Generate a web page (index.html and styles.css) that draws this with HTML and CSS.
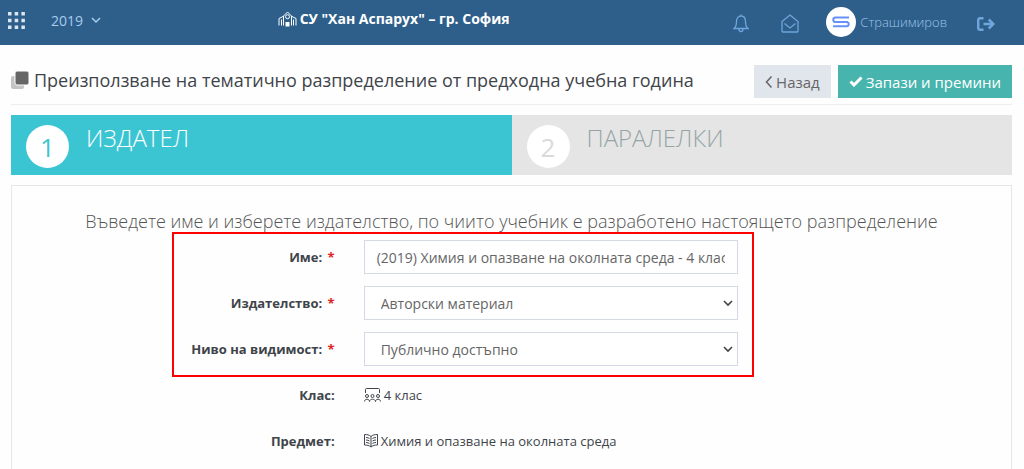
FILE: index.html
```html
<!DOCTYPE html>
<html lang="bg">
<head>
    <meta charset="UTF-8">
    <meta name="viewport" content="width=device-width, initial-scale=1.0">
    <title>Преизползване на тематично разпределение</title>
    <link rel="stylesheet" href="styles.css">
</head>
<body>
    <header class="topbar">
        <div class="topbar-left">
            <button type="button" class="icon-button" aria-label="Меню">
                <svg class="icon-apps" width="17" height="17" viewBox="0 0 17 17">
                    <path d="M0 0h3.500v3.500H0zM6.700 0h3.500v3.500h-3.500zM13.400 0h3.500v3.500h-3.500zM0 6.700h3.500v3.500H0zM6.700 6.700h3.500v3.500h-3.500zM13.400 6.700h3.500v3.500h-3.500zM0 13.400h3.500v3.500H0zM6.700 13.400h3.500v3.500h-3.500zM13.400 13.400h3.500v3.500h-3.500z"/>
                </svg>
            </button>
            <button type="button" class="year">
                2019
                <svg width="10" height="7" viewBox="0 0 10 7"><path d="M1 1l4 4 4-4"/></svg>
            </button>
        </div>
        <a href="#" class="school">
            <svg width="19" height="16" viewBox="0 0 19 16">
                <path d="M1 14.500V7.500L5 5.500M18 14.500V7.500L14 5.500M3.500 8.500v6M15.500 8.500v6M5.500 14.500V5L9.500 1l4 4v9.500"/>
                <circle cx="9.500" cy="5.700" r="2"/>
                <path class="fill" d="M7.500 15.500V11h4v4.500z"/>
            </svg>
            СУ "Хан Аспарух" – гр. София
        </a>
        <div class="topbar-right">
            <button type="button" class="icon-button" aria-label="Известия">
                <svg width="16" height="19" viewBox="0 0 16 19">
                    <path d="M1 14.500c2-1.500 2.500-3 2.500-7C3.500 4 5.500 2 8 2s4.500 2 4.500 5.500c0 4 .5 5.500 2.500 7zM8 .5V2M6 15c0 3.500 4 3.500 4 0"/>
                </svg>
            </button>
            <button type="button" class="icon-button" aria-label="Съобщения">
                <svg width="18" height="19" viewBox="0 0 18 19">
                    <path d="M1 7.500L9 1l8 6.500V17a1 1 0 0 1-1 1H2a1 1 0 0 1-1-1zM3.500 9.500L9 14l5.500-4.500"/>
                </svg>
            </button>
            <a href="#" class="user">
                <span class="avatar">
                    <svg width="18" height="12" viewBox="0 0 18 12"><path d="M17 1.500H3.500a2.200 2.200 0 0 0 0 4.400h11a2.200 2.200 0 0 1 0 4.400H1M16 5.900H3.500M2 5.900H14.500"/></svg>
                </span>
                Страшимиров
            </a>
            <button type="button" class="icon-button logout" aria-label="Изход">
                <svg width="18" height="14" viewBox="0 0 18 14">
                    <path d="M6.500 1.200H3.200a2 2 0 0 0-2 2v7.600a2 2 0 0 0 2 2h3.300M6.500 7H16M11.800 2.500L16.300 7l-4.500 4.500"/>
                </svg>
            </button>
        </div>
    </header>

    <main>
        <div class="page-head">
            <h1>
                <svg width="18" height="18" viewBox="0 0 18 18">
                    <rect class="back" x="0" y="5" width="13" height="13" rx="2"/>
                    <rect class="front" x="4" y="0" width="14" height="14" rx="2"/>
                </svg>
                Преизползване на тематично разпределение от предходна учебна година
            </h1>
            <div class="actions">
                <button type="button" class="btn btn-back">
                    <svg width="8" height="14" viewBox="0 0 8 14"><path d="M6.500 1.500L1.500 7l5 5.500"/></svg>
                    Назад
                </button>
                <button type="submit" form="publisherForm" class="btn btn-save">
                    <svg width="14" height="11" viewBox="0 0 14 11"><path d="M1.500 5.500l3.500 3.500 7.500-7.500"/></svg>
                    Запази и премини
                </button>
            </div>
        </div>

        <ol class="steps">
            <li class="step active">
                <span class="number">1</span>
                <span class="step-title">ИЗДАТЕЛ</span>
            </li>
            <li class="step">
                <span class="number">2</span>
                <span class="step-title">ПАРАЛЕЛКИ</span>
            </li>
        </ol>

        <form id="publisherForm" class="panel">
            <h2>Въведете име и изберете издателство, по чиито учебник е разработено настоящето разпределение</h2>
            <div class="required-fields">
                <div class="row">
                    <label for="name">Име: <span class="star">*</span></label>
                    <input type="text" id="name" name="name" value="(2019) Химия и опазване на околната среда - 4 клас" required>
                </div>
                <div class="row">
                    <label for="publisher">Издателство: <span class="star">*</span></label>
                    <div class="select">
                        <select id="publisher" name="publisher" required>
                            <option>Авторски материал</option>
                        </select>
                        <svg width="10" height="7" viewBox="0 0 10 7"><path d="M1 1l4 4 4-4"/></svg>
                    </div>
                </div>
                <div class="row">
                    <label for="visibility">Ниво на видимост: <span class="star">*</span></label>
                    <div class="select">
                        <select id="visibility" name="visibility" required>
                            <option>Публично достъпно</option>
                        </select>
                        <svg width="10" height="7" viewBox="0 0 10 7"><path d="M1 1l4 4 4-4"/></svg>
                    </div>
                </div>
            </div>
            <dl>
                <div class="row">
                    <dt>Клас:</dt>
                    <dd>
                        <svg width="17" height="14" viewBox="0 0 17 14">
                            <path d="M1.500 5V1.500a1 1 0 0 1 1-1h12a1 1 0 0 1 1 1V5"/>
                            <circle cx="3" cy="8" r="1.500"/>
                            <circle cx="8.500" cy="8" r="1.500"/>
                            <circle cx="14" cy="8" r="1.500"/>
                            <path d="M.5 13.500c0-3 5-3 5 0 0-3 6-3 6 0 0-3 5-3 5 0"/>
                        </svg>
                        4 клас
                    </dd>
                </div>
                <div class="row">
                    <dt>Предмет:</dt>
                    <dd>
                        <svg width="14" height="14" viewBox="0 0 14 14">
                            <path d="M7 2.500C5.500 1 3 .5.5.5V11c2.500 0 5 .5 6.500 2 1.500-1.500 4-2 6.500-2V.5C11 .5 8.500 1 7 2.500zV13M2 3.500c1.500 0 2.500.3 3.500 1M2 6c1.500 0 2.500.3 3.500 1M2 8.500c1.500 0 2.500.3 3.500 1M12 3.500c-1.500 0-2.500.3-3.500 1M12 6c-1.500 0-2.500.3-3.500 1M12 8.500c-1.500 0-2.500.3-3.500 1"/>
                        </svg>
                        Химия и опазване на околната среда
                    </dd>
                </div>
            </dl>
        </form>
    </main>
</body>
</html>
```
FILE: styles.css
```css
* {
    box-sizing: border-box;
}

body {
    margin: 0;
    min-height: 100vh;
    display: flex;
    flex-direction: column;
    background-color: #fefefe;
    color: #3f444a;
    font-family: "Open Sans", sans-serif;
    font-size: 13px;
}

svg {
    fill: none;
    stroke: currentColor;
    flex-shrink: 0;
}

button {
    border: none;
    background: none;
    padding: 0;
    font-family: inherit;
    cursor: pointer;
}

.topbar {
    display: grid;
    grid-template-columns: 5fr auto 9fr;
    height: 45px;
    padding: 0 29px 0 8px;
    background-color: #2e5f8b;
    color: #6ea6dc;
}

.topbar-left,
.topbar-right,
.user {
    display: flex;
    align-items: center;
}

.topbar-left {
    gap: 26px;
    padding-bottom: 4px;
}

.topbar-right {
    justify-content: flex-end;
}

.icon-button {
    display: flex;
    color: inherit;
}

.icon-apps {
    fill: #dbe6f1;
    stroke: none;
}

.year {
    display: flex;
    align-items: center;
    gap: 8px;
    color: #a9cbec;
    font-size: 14px;
}

.year svg {
    stroke-width: 1.5;
}

.school {
    display: flex;
    align-items: center;
    gap: 3px;
    padding-bottom: 8px;
    color: #fff;
    font-size: 14px;
    font-weight: 700;
    text-decoration: none;
    white-space: nowrap;
}

.school .fill {
    fill: #fff;
    stroke: none;
}

.topbar-right .icon-button {
    margin-right: 32px;
    padding-top: 2px;
    stroke-width: 1.3;
}

.topbar-right .icon-button + .user {
    margin-left: -5px;
}

.topbar-right .logout {
    margin: 0 0 0 30px;
}

.logout svg {
    stroke-width: 2.5;
}

.user {
    gap: 4px;
    padding-bottom: 2px;
    color: #9dc3e8;
    font-size: 13px;
    font-weight: 300;
    text-decoration: none;
}

.avatar {
    display: grid;
    place-items: center;
    width: 30px;
    height: 30px;
    border-radius: 50%;
    background-color: #fff;
    color: #6690fa;
}

.avatar svg {
    stroke-width: 2;
}

main {
    flex: 1;
    display: flex;
    flex-direction: column;
    padding: 20px 12px 0 11px;
}

.page-head {
    display: flex;
    justify-content: space-between;
    align-items: flex-start;
    min-height: 40px;
    margin-bottom: 10px;
    border-bottom: 1px solid #eee;
}

h1 {
    display: flex;
    align-items: center;
    gap: 5px;
    margin: 0;
    font-size: 18px;
    font-weight: 400;
    line-height: 30px;
}

h1 .back {
    fill: #c4c4c4;
    stroke: none;
}

h1 .front {
    fill: #666;
    stroke: #fff;
}

.actions {
    display: flex;
    gap: 7px;
}

.btn {
    display: flex;
    align-items: center;
    gap: 3px;
    height: 33px;
    padding: 0 11px;
    font-size: 15px;
    white-space: nowrap;
}

.btn-back {
    background-color: #e1e5ec;
    color: #666;
}

.btn-save {
    background-color: #47b5ae;
    color: #fff;
}

.btn svg {
    stroke-width: 1.5;
}

.btn-save svg {
    stroke-width: 3;
}

.steps {
    display: flex;
    margin: 0 0 10px;
    padding: 0;
    list-style: none;
}

.step {
    flex: 1;
    display: flex;
    gap: 17px;
    min-height: 60px;
    padding: 10px 15px 7px;
    background-color: #e5e5e5;
    color: #95a5a6;
}

.step.active {
    background-color: #3bc5d2;
    color: #fff;
}

.number {
    width: 43px;
    height: 43px;
    border-radius: 50%;
    background-color: #fff;
    color: #dadada;
    font-size: 26px;
    line-height: 44px;
    text-align: center;
}

.active .number {
    color: #3bc5d2;
}

.step-title {
    font-size: 24px;
    font-weight: 300;
    line-height: 26px;
}

.panel {
    flex: 1;
    border: 1px solid #e7e7e7;
    border-bottom: none;
    padding-top: 23px;
}

h2 {
    margin: 0 0 7px;
    color: #555;
    font-size: 18px;
    font-weight: 300;
    line-height: 24px;
    text-align: center;
}

.row {
    display: grid;
    grid-template-columns: 32.3% 37.5%;
    column-gap: 29px;
    align-items: center;
    min-height: 34px;
    margin-bottom: 12px;
}

.row label,
dt {
    font-weight: 700;
    text-align: right;
}

.star {
    margin-left: 2px;
    color: #e02222;
}

.required-fields {
    position: relative;
}

.required-fields::before {
    content: "";
    position: absolute;
    top: -8px;
    bottom: -11px;
    left: 16%;
    right: 25.7%;
    border: 2px solid #f00;
    pointer-events: none;
}

.required-fields .row:last-child {
    margin-bottom: 0;
}

input,
select {
    width: 100%;
    height: 34px;
    padding: 0 12px;
    border: 1px solid #d5d9e6;
    border-radius: 0;
    background-color: #fff;
    color: #666;
    font-family: inherit;
    font-size: 14px;
}

select {
    appearance: none;
    padding: 0 16px;
}

.select {
    position: relative;
}

.select svg {
    position: absolute;
    top: 14px;
    right: 5px;
    color: #444;
    stroke-width: 1.6;
    pointer-events: none;
}

dl {
    margin: 12px 0 0;
}

dd {
    display: flex;
    align-items: center;
    gap: 3px;
    margin: 0;
}
```
